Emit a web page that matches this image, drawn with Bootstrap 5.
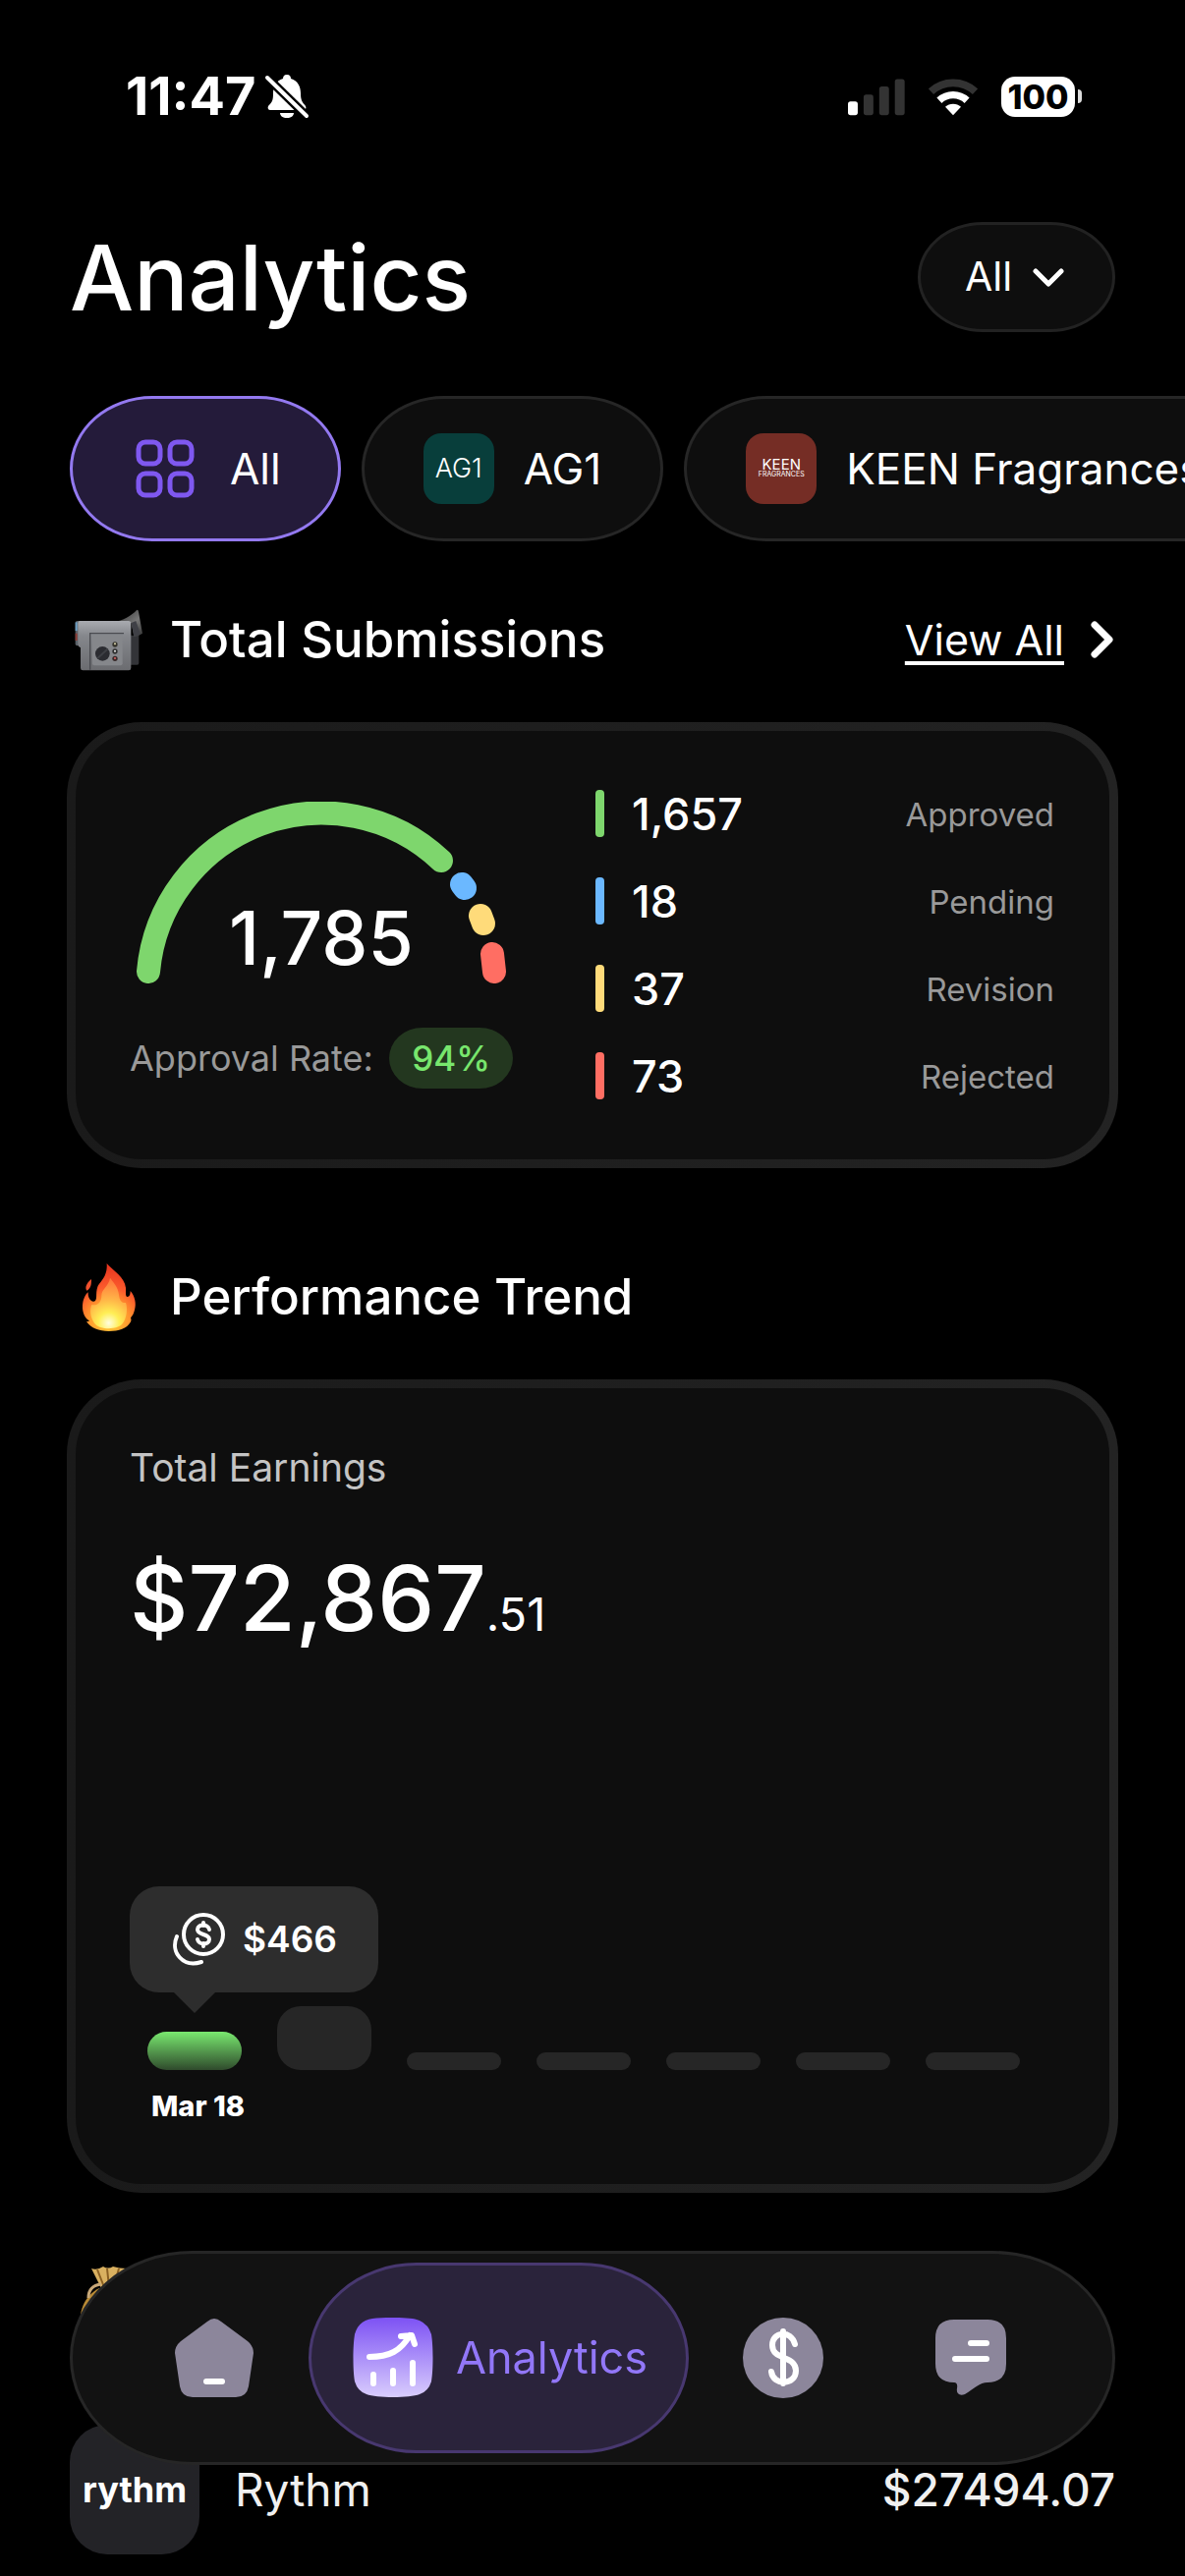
<!DOCTYPE html>
<html lang="en" data-bs-theme="dark">
<head>
<meta charset="utf-8">
<meta name="viewport" content="width=device-width, initial-scale=1">
<title>Analytics</title>
<link href="https://cdn.jsdelivr.net/npm/bootstrap@5.3.0/dist/css/bootstrap.min.css" rel="stylesheet">
<style>
  body { background:#000; color:#fff; font-family:Inter, "Liberation Sans", sans-serif; overflow-x:hidden; }
  svg { display:block; flex:none; }
  .screen { padding:0 68px 20px; }
  .inset-x { padding-left:3px; padding-right:3px; }

  .status-bar { height:196px; padding:0 37px 0 60px; }
  .clock { font-size:54px; line-height:60px; font-weight:700; }
  .battery { width:75px; height:41px; border-radius:14px; background:#fff; color:#000; font-size:34px; line-height:41px; font-weight:800; }
  .battery-tip { width:4px; height:14px; margin-left:3px; border-radius:0 4px 4px 0; background:#ddd; }

  .title-bar { margin-top:30px; }
  .title-text { font-size:92px; line-height:114px; height:112px; font-weight:500; }
  .range-select { width:201px; height:112px; padding:0 0 0 45px; border:3px solid #222; border-radius:66px / 56px; background:#0e0e0e; color:#fff; font-size:41px; appearance:none; }
  .range-arrow { position:absolute; right:52px; top:47px; pointer-events:none; }

  .chips { gap:21px; margin:65px -68px 0; padding:0 71px; overflow-x:auto; scrollbar-width:none; }
  .chip { flex:none; height:148px; padding:0 58px; gap:30px; border:3px solid #262626; border-radius:84px / 74px; background:#0e0e0e; color:#fff; font-size:44px; white-space:nowrap; }
  .chip-on { background:#241b3a; border-color:#9379f0; }
  .chip-brand { padding:0 60px; }
  .brand-tile { width:72px; height:72px; border-radius:18px; }
  .brand-ag { background:#083e3b; font-size:27px; font-weight:300; }
  .brand-keen { background:#752d25; font-size:15px; line-height:12px; }
  .brand-sub { font-size:7px; line-height:8px; }

  .section-head { height:80px; margin-bottom:44px; }
  .section-title { font-size:51px; line-height:64px; font-weight:500; }
  .head-gap { gap:22px; }
  .head-a { margin-top:60px; }
  .head-b { margin-top:91px; }
  .head-c { margin-top:69px; margin-bottom:87px; }
  .view-link { color:#fff; font-size:43px; gap:26px; text-underline-offset:6px; text-decoration-thickness:4px; }

  .panel { border:9px solid transparent; border-radius:76px; background:linear-gradient(#0e0e0e,#0e0e0e) padding-box, linear-gradient(90deg,#1a1a1a,#232323) border-box; }
  .panel-stats { padding:60px 56px 61px 55px; gap:84px; }
  .gauge-col { width:390px; }
  .gauge-total { position:absolute; left:0; right:0; bottom:0; font-size:75px; line-height:92px; font-weight:500; }
  .rate-row { margin-top:45px; font-size:36px; line-height:62px; color:#999; }
  .rate-pill { background:#23371f; color:#78e66d; font-size:35px; font-weight:500; border-radius:34px / 31px; padding:0 23px; }
  .legend { gap:41px; }
  .legend-row { height:48px; gap:28px; }
  .legend-mark { width:9px; height:48px; border-radius:4px; }
  .legend-num { font-size:45px; line-height:50px; font-weight:500; }
  .legend-name { font-size:33px; line-height:50px; color:#999; }
  .c-ok { background:#7ed66d; } .c-wait { background:#6bb8ff; } .c-fix { background:#ffdb7a; } .c-no { background:#ff6e63; }

  .panel-trend { padding:56px 55px 63px; }
  .trend-label { font-size:39px; line-height:50px; color:#c4c4c4; }
  .trend-total { margin-top:58px; font-size:92px; line-height:100px; font-weight:500; }
  .trend-cents { font-size:47px; line-height:1; font-weight:400; }
  .tip-box { position:relative; width:max-content; height:108px; margin-top:243px; padding:0 42px; gap:17px; border-radius:30px; background:#2d2d2d; font-size:37px; font-weight:600; }
  .tip-box::after { content:""; position:absolute; left:45px; top:100%; border:21px solid transparent; border-top-color:#2d2d2d; border-bottom:0; }
  .bars { height:65px; margin:14px 36px 0 18px; }
  .bar-item { width:96px; border-radius:24px; background:#262626; }
  .bar-on { background:linear-gradient(#79e86f,#2f4a2c); }
  .bar-date { margin:21px 0 0 22px; font-size:29px; line-height:32px; font-weight:800; }

  .brand-big { width:132px; height:132px; border-radius:38px; background:#232327; font-size:36px; font-weight:700; }
  .brand-name { font-size:46px; color:#f0f0f0; margin-left:36px; }
  .brand-sum { font-size:46px; font-weight:500; color:#f0f0f0; }

  .tab-wrap { padding:0 71px 113px; }
  .tab-pill { height:218px; border:3px solid #262626; border-radius:125px / 109px; background:#121212; }
  .tab-item { width:191px; height:194px; color:#9277f8; font-size:45px; text-decoration:none; }
  .tab-on { width:auto; padding:0 39px 0 42px; gap:23px; border:3px solid #483870; border-radius:110px / 97px; background:#2a233b; }
</style>
</head>
<body>
<div class="screen">
  <div class="status-bar d-flex align-items-center justify-content-between">
    <div class="d-flex align-items-center gap-2">
      <span class="clock">11:47</span>
      <svg width="46" height="46" viewBox="0 0 46 46" aria-hidden="true">
        <path fill="#fff" d="M23 1c3 0 4 2 4 4 7 2 10 8 10 15 0 8 2 9 5 13 1 2 0 4-2 4H6c-2 0-3-2-2-4 4-4 5-6 5-13C9 13 12 7 19 5c0-2 1-4 4-4zM16 40h14c0 3-3 5-7 5s-7-2-7-5z"/>
        <path stroke="#000" stroke-width="9" d="M2 3l42 41"/><path stroke="#fff" stroke-width="4" stroke-linecap="round" d="M3 4l40 39"/>
      </svg>
    </div>
    <div class="d-flex align-items-center">
      <svg class="me-4" width="58" height="40" viewBox="45 50 175 120" aria-hidden="true">
        <rect x="45" y="126" width="30" height="42" rx="8" fill="#fff"/>
        <g fill="#333"><rect x="93" y="105" width="30" height="63" rx="8"/><rect x="141" y="80" width="30" height="88" rx="8"/><rect x="189" y="57" width="30" height="111" rx="8"/></g>
      </svg>
      <svg class="me-4" width="50" height="40" viewBox="286 50 150 120" aria-hidden="true">
        <path fill="none" stroke="#333" stroke-width="23" d="M293.500 95.600a99 99 0 0 1 135 0"/>
        <path fill="none" stroke="#fff" stroke-width="22" d="M318.700 122.700a62 62 0 0 1 84.600 0"/>
        <path fill="#fff" d="M361 168l-24-25.600a35 35 0 0 1 48 0z"/>
      </svg>
      <div class="battery text-center">100</div><div class="battery-tip"></div>
    </div>
  </div>

  <header class="title-bar inset-x d-flex align-items-center justify-content-between">
    <h1 class="title-text m-0">Analytics</h1>
    <div class="position-relative">
      <select class="range-select" aria-label="Range"><option>All</option></select>
      <svg class="range-arrow" width="32" height="20" viewBox="0 0 32 20" aria-hidden="true"><path d="M3 3l13 13L29 3" fill="none" stroke="#fff" stroke-width="5" stroke-linecap="round" stroke-linejoin="round"/></svg>
    </div>
  </header>

  <div class="chips d-flex">
    <button type="button" class="chip chip-on d-flex align-items-center">
      <svg width="72" height="72" viewBox="0 0 72 72" fill="none" stroke="#7f58f0" stroke-width="5" aria-hidden="true"><rect x="9" y="9" width="22" height="22" rx="7"/><rect x="41" y="9" width="22" height="22" rx="7"/><rect x="9" y="41" width="22" height="22" rx="7"/><rect x="41" y="41" width="22" height="22" rx="7"/></svg>
      <span>All</span>
    </button>
    <button type="button" class="chip chip-brand d-flex align-items-center">
      <span class="brand-tile brand-ag d-flex align-items-center justify-content-center">AG1</span>
      <span>AG1</span>
    </button>
    <button type="button" class="chip chip-brand d-flex align-items-center">
      <span class="brand-tile brand-keen d-flex flex-column align-items-center justify-content-center"><span>KEEN</span><span class="brand-sub">FRAGRANCES</span></span>
      <span>KEEN Fragrances</span>
    </button>
  </div>

  <div class="section-head head-a inset-x d-flex align-items-center justify-content-between">
    <div class="head-gap d-flex align-items-center">
      <svg width="80" height="80" viewBox="15 3 240 240" aria-hidden="true">
        <defs>
          <linearGradient id="cam" x1="0" y1="0" x2="0" y2="1"><stop offset="0" stop-color="#a9abb0"/><stop offset=".3" stop-color="#85878c"/><stop offset="1" stop-color="#6b6c70"/></linearGradient>
          <linearGradient id="eye" x1="0" y1="0" x2="1" y2="1"><stop offset="0" stop-color="#222"/><stop offset=".6" stop-color="#777"/><stop offset="1" stop-color="#333"/></linearGradient>
        </defs>
        <path fill="#333438" d="M196 110h30v85q0 5-5 5h-25z"/>
        <path fill="url(#eye)" d="M146 70c30-5 55-18 74-38q5 0 5 6l12 66q-14 10-26 10l-8-42-32 3z"/>
        <path fill="#3f4046" d="M203 72l14-6 14 40q-10 8-20 8z"/>
        <rect x="32" y="66" width="20" height="76" rx="6" fill="#5b6269"/>
        <path fill="#6d9fc4" d="M32 70h6v26h-6z"/><path fill="#8b3b35" d="M32 104h6v22h-6z"/>
        <path fill="url(#cam)" d="M46 66h148q8 0 8 8v136q0 7-7 7H55q-7 0-7-7v-62q-8-3-8-12V72q0-6 6-6z"/>
        <path fill="none" stroke="#4a4b50" stroke-width="4" d="M77 215V104h103"/>
        <rect x="84" y="108" width="92" height="94" rx="6" fill="#85878b"/>
        <circle cx="115" cy="166" r="22" fill="#2b2c31"/><path stroke="#3d3f44" stroke-width="6" d="M100 180l30-28"/>
        <circle cx="153" cy="138" r="8" fill="#36342c"/><circle cx="153" cy="159" r="8" fill="#2f3030"/><circle cx="153" cy="181" r="8" fill="#3a2a2a"/>
        <circle cx="153" cy="136" r="3" fill="#ded9b0"/><circle cx="153" cy="158" r="3" fill="#eee"/><circle cx="153" cy="180" r="3" fill="#d66"/>
      </svg>
      <h2 class="section-title m-0">Total Submissions</h2>
    </div>
    <a class="view-link d-flex align-items-center" href="#">View All
      <svg width="26" height="40" viewBox="0 0 26 40" aria-hidden="true"><path d="M5 5l15 15L5 35" fill="none" stroke="#fff" stroke-width="7" stroke-linecap="round" stroke-linejoin="round"/></svg>
    </a>
  </div>

  <section class="panel panel-stats d-flex align-items-center">
    <div class="gauge-col flex-shrink-0">
      <div class="position-relative">
        <svg width="390" height="185" viewBox="0 0 390 185" fill="none" stroke-width="24" stroke-linecap="round" aria-hidden="true">
          <path stroke="#7ed66d" d="M19 173A177 177 0 0 1 317 60"/>
          <path stroke="#6bb8ff" d="M338 84l3 4"/><path stroke="#ffdb7a" d="M357 116l3 8"/><path stroke="#ff6e63" d="M369 155l2 18"/>
        </svg>
        <div class="gauge-total text-center">1,785</div>
      </div>
      <div class="rate-row d-flex justify-content-between"><span>Approval Rate:</span><span class="rate-pill">94%</span></div>
    </div>
    <div class="legend flex-grow-1 d-flex flex-column">
      <div class="legend-row d-flex"><span class="legend-mark c-ok"></span><span class="legend-num">1,657</span><span class="legend-name ms-auto">Approved</span></div>
      <div class="legend-row d-flex"><span class="legend-mark c-wait"></span><span class="legend-num">18</span><span class="legend-name ms-auto">Pending</span></div>
      <div class="legend-row d-flex"><span class="legend-mark c-fix"></span><span class="legend-num">37</span><span class="legend-name ms-auto">Revision</span></div>
      <div class="legend-row d-flex"><span class="legend-mark c-no"></span><span class="legend-num">73</span><span class="legend-name ms-auto">Rejected</span></div>
    </div>
  </section>

  <div class="section-head head-b head-gap inset-x d-flex align-items-center">
    <svg width="80" height="80" viewBox="15 12 240 240" aria-hidden="true">
      <defs>
        <radialGradient id="fire" gradientUnits="userSpaceOnUse" cx="134" cy="205" r="170"><stop offset="0" stop-color="#ffd83a"/><stop offset=".35" stop-color="#ff9a2e"/><stop offset=".6" stop-color="#fb5a2c"/><stop offset="1" stop-color="#e8341f"/></radialGradient>
        <radialGradient id="core" gradientUnits="userSpaceOnUse" cx="134" cy="212" r="130"><stop offset="0" stop-color="#fffde0"/><stop offset=".25" stop-color="#ffee55"/><stop offset=".55" stop-color="#ffb648"/><stop offset="1" stop-color="#ff7a3c"/></radialGradient>
      </defs>
      <path fill="#f0502d" d="M81 78C66 90 60 104 67 113C80 106 81 92 81 78z"/>
      <path fill="url(#fire)" d="M128 30C148 52 182 72 186 104C187 118 184 128 190 132C199 132 200 122 200 114C214 130 219 152 213 172C211 182 207 190 201 196C203 200 203 207 200 210C190 228 165 237 134 237C104 237 80 228 66 208C70 208 73 207 75 205C60 196 53 178 54 158C55 140 62 126 71 118C70 134 78 147 88 146C102 144 92 122 100 101C107 85 131 72 128 30z"/>
      <path fill="url(#core)" d="M138 74C152 92 163 104 165 126C167 146 176 152 186 150C192 166 190 196 176 214C160 234 106 234 90 212C76 192 76 168 82 156C100 160 112 148 112 128C112 108 134 100 138 74z"/>
    </svg>
    <h2 class="section-title m-0">Performance Trend</h2>
  </div>

  <section class="panel panel-trend">
    <div class="trend-label">Total Earnings</div>
    <div class="trend-total">$72,867<span class="trend-cents">.51</span></div>
    <div class="tip-box d-flex align-items-center">
      <svg width="56" height="58" viewBox="0 0 56 58" fill="none" stroke="#fff" stroke-width="4" stroke-linecap="round" aria-hidden="true">
        <circle cx="33" cy="24" r="20"/><path d="M6 26C-1 42 12 58 31 52"/>
        <path stroke-width="4" d="M39 19c-1-6-12-6-12 0 0 3 3 4 6 5s6 2 6 5c0 6-11 6-12 0M33 12v3M33 33v3"/>
      </svg>
      <span>$466</span>
    </div>
    <div class="bars d-flex align-items-end justify-content-between">
      <div class="bar-item bar-on" style="height:39px"></div>
      <div class="bar-item" style="height:65px"></div>
      <div class="bar-item" style="height:18px"></div>
      <div class="bar-item" style="height:18px"></div>
      <div class="bar-item" style="height:18px"></div>
      <div class="bar-item" style="height:18px"></div>
      <div class="bar-item" style="height:18px"></div>
    </div>
    <div class="bar-date">Mar 18</div>
  </section>

  <div class="section-head head-c inset-x d-flex align-items-center">
    <svg width="80" height="80" viewBox="0 0 80 80" aria-hidden="true">
      <path fill="#b98a35" d="M30 28C14 36 8 54 12 68c4 12 52 12 56 0 4-14-2-32-18-40z"/>
      <path fill="#d9b060" d="M22 8q6 2 12-2 5 3 10 0 6 2 14 2l-8 20H32z"/><path stroke="#8a5f22" stroke-width="2" d="M28 9l7 18M38 8l2 19M50 8l-5 18"/>
      <path fill="none" stroke="#c9a878" stroke-width="3" d="M32 24c-9 1-13 6-13 14"/>
    </svg>
  </div>

  <div class="inset-x d-flex align-items-center">
    <span class="brand-big d-flex align-items-center justify-content-center">rythm</span>
    <span class="brand-name">Rythm</span>
    <span class="brand-sum ms-auto">$27494.07</span>
  </div>
</div>

<nav class="tab-wrap fixed-bottom">
  <div class="tab-pill d-flex align-items-center justify-content-center">
    <a class="tab-item d-flex align-items-center justify-content-center" href="#" aria-label="Home">
      <svg width="82" height="82" viewBox="0 0 82 82" aria-hidden="true"><path fill="#8c869b" d="M34 4q7-6 14 0l27 20q6 5 6 12l-5 34q-2 11-13 11H19Q8 81 6 70L1 36q0-7 6-12z"/><path stroke="#fff" stroke-width="6" stroke-linecap="round" d="M33 65h16"/></svg>
    </a>
    <a class="tab-item tab-on d-flex align-items-center" href="#" aria-current="page">
      <svg width="82" height="82" viewBox="0 0 82 82" fill="none" stroke="#fff" stroke-width="6" stroke-linecap="round" stroke-linejoin="round" aria-hidden="true">
        <defs><linearGradient id="tab" x1="0" y1="0" x2="0" y2="1"><stop offset="0" stop-color="#7d52f4"/><stop offset="1" stop-color="#d9cdfd"/></linearGradient></defs>
        <path fill="url(#tab)" stroke="none" d="M24 0.500C48-.5 60 0 68 3q9 4 12 14c2 12 2 36 0 48q-3 10-12 13c-10 4-44 4-54 0Q5 75 2 65C0 53 0 29 2 17 5 6 13 1 24 .5z"/>
        <path d="M17 40c20 0 32-6 41-22M49 19l11-1 3 9"/>
        <path d="M21 58v9M41 54v13M61 46v21"/>
      </svg>
      <span>Analytics</span>
    </a>
    <a class="tab-item d-flex align-items-center justify-content-center" href="#" aria-label="Earnings">
      <svg width="82" height="82" viewBox="0 0 82 82" fill="none" stroke="#fff" stroke-width="6" stroke-linecap="round" aria-hidden="true"><circle cx="41" cy="41" r="41" fill="#8c869b" stroke="none"/><path d="M53 27C49 12 30 14 30 28c0 16 24 10 24 26 0 15-23 16-25 1M41 14v53"/></svg>
    </a>
    <a class="tab-item d-flex align-items-center justify-content-center" href="#" aria-label="Messages">
      <svg width="74" height="82" viewBox="0 0 74 82" stroke-linecap="round" aria-hidden="true"><path fill="#8c869b" d="M20 2h34q19 0 19 19v26q0 19-19 19c-8 0-13 6-23 12-6 2-9-1-8-6q1-6-3-6Q1 66 1 47V21Q1 2 20 2z"/><path stroke="#fff" stroke-width="6" d="M37 26h16M21 42h32"/></svg>
    </a>
  </div>
</nav>
<script src="https://cdn.jsdelivr.net/npm/bootstrap@5.3.0/dist/js/bootstrap.bundle.min.js"></script>
</body>
</html>
